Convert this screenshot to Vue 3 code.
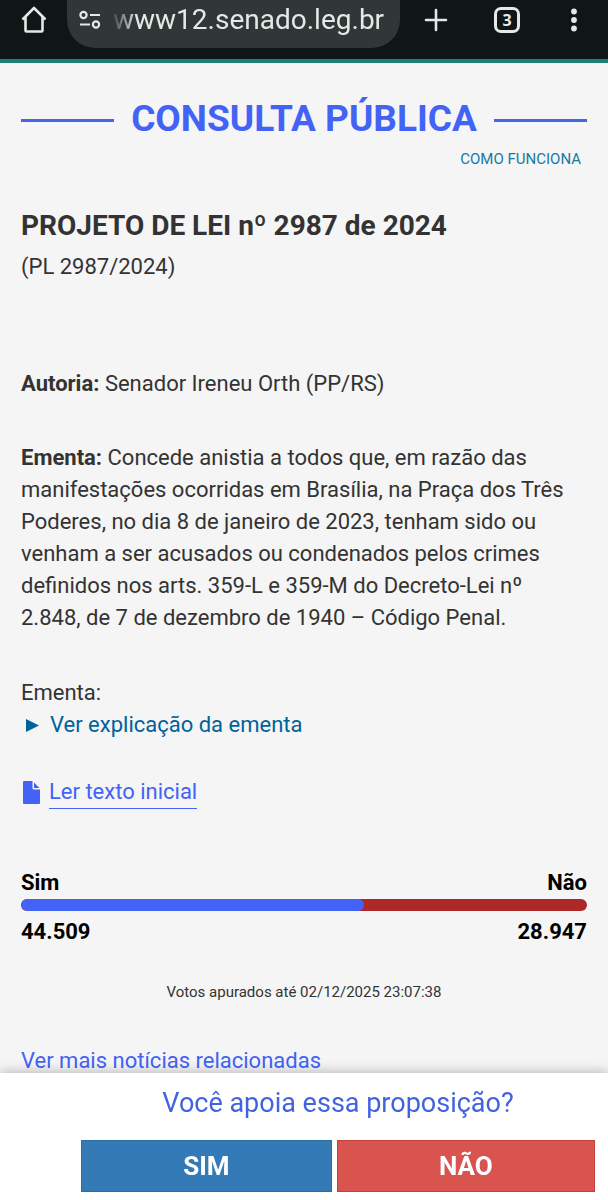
<script setup>
import { computed } from 'vue'

const votes = { yes: 44509, no: 28947 }
const format = (n) => String(n).replace(/\B(?=(\d{3})+$)/g, '.')
const yesShare = computed(() => (votes.yes / (votes.yes + votes.no)) * 100 + '%')
</script>

<template>
  <div class="screen">
    <header class="browser">
      <button class="icon-button home" type="button" aria-label="Página inicial">
        <svg width="26" height="28" viewBox="0 0 26 28">
          <path d="M1.5 13.5 13 2l11.5 11.5M4.5 11v13.5q0 1 1 1h15q1 0 1-1V11" fill="none" stroke="currentColor" stroke-width="2.6" stroke-linejoin="round" />
        </svg>
      </button>
      <div class="address">
        <svg width="22" height="20" viewBox="0 0 22 20" fill="none" stroke="currentColor" stroke-width="2.2">
          <circle cx="4.5" cy="5" r="3.1" />
          <path d="M11 5h10M1 14.5h10" />
          <circle cx="17" cy="14.5" r="3.1" />
        </svg>
        <input class="url" type="text" value="www12.senado.leg.br" aria-label="Endereço" readonly />
      </div>
      <nav class="tools">
        <button class="icon-button" type="button" aria-label="Nova guia">
          <svg width="24" height="24" viewBox="0 0 24 24">
            <path d="M12 2v20M2 12h20" stroke="currentColor" stroke-width="2.6" stroke-linecap="round" />
          </svg>
        </button>
        <button class="icon-button tabs" type="button" aria-label="Guias abertas">3</button>
        <button class="icon-button" type="button" aria-label="Mais opções">
          <svg width="16" height="24" viewBox="0 0 16 24" fill="currentColor">
            <circle cx="8" cy="3.5" r="2.9" />
            <circle cx="8" cy="12" r="2.9" />
            <circle cx="8" cy="20.5" r="2.9" />
          </svg>
        </button>
      </nav>
    </header>

    <main class="content">
      <h1 class="title">CONSULTA PÚBLICA</h1>
      <a class="how" href="#">COMO FUNCIONA</a>

      <h2 class="bill">PROJETO DE LEI nº 2987 de 2024</h2>
      <p class="short">(PL 2987/2024)</p>

      <p class="author"><strong>Autoria:</strong> Senador Ireneu Orth (PP/RS)</p>
      <p class="summary">
        <strong>Ementa:</strong> Concede anistia a todos que, em razão das manifestações ocorridas em Brasília, na Praça dos Três Poderes, no dia 8 de janeiro de 2023, tenham sido ou venham a ser acusados ou condenados pelos crimes definidos nos arts. 359-L e 359-M do Decreto-Lei nº 2.848, de 7 de dezembro de 1940 – Código Penal.
      </p>

      <p>Ementa:</p>
      <a class="explain" href="#">
        <svg width="14" height="14" viewBox="0 0 14 14"><path d="M1 1 14 7.500 1 14z" fill="currentColor" /></svg>
        Ver explicação da ementa
      </a>

      <a class="read" href="#">
        <svg width="18" height="24" viewBox="0 0 18 24" fill="currentColor">
          <path d="M1 0h8.500v7q0 1.500 1.500 1.500H17V22q0 1-1 1H1q-1 0-1-1V1q0-1 1-1z" />
          <path d="M11 1.500 16.500 7H11z" />
        </svg>
        <span>Ler texto inicial</span>
      </a>

      <section class="result">
        <div class="row"><span>Sim</span><span>Não</span></div>
        <div class="bar"><div class="yes" :style="{ width: yesShare }"></div></div>
        <div class="row"><span>{{ format(votes.yes) }}</span><span>{{ format(votes.no) }}</span></div>
      </section>
      <p class="counted">Votos apurados até 02/12/2025 23:07:38</p>
      <a class="news" href="#">Ver mais notícias relacionadas</a>
    </main>

    <footer class="vote">
      <p class="question">Você apoia essa proposição?</p>
      <div class="choices">
        <button class="choice agree" type="button">SIM</button>
        <button class="choice disagree" type="button">NÃO</button>
      </div>
    </footer>
  </div>
</template>

<style>
body {
  background: #f5f5f5;
}
</style>

<style scoped>
.screen {
  font-family: Roboto, "Liberation Sans", sans-serif;
  font-size: 22px;
  line-height: 32px;
  color: #333;
}
h1, h2, p {
  margin: 0;
}
a {
  text-decoration: none;
}
.browser {
  display: flex;
  align-items: flex-start;
  gap: 20px;
  height: 59px;
  padding: 0 26px 0 21px;
  background: #101516;
  border-bottom: 4px solid #1c7f78;
  color: #e4e9e8;
}
.icon-button {
  display: flex;
  align-items: center;
  justify-content: center;
  padding: 0;
  border: 0;
  background: none;
  color: inherit;
  font: inherit;
}
.home {
  height: 40px;
}
.address {
  flex: 1;
  min-width: 0;
  display: flex;
  align-items: center;
  gap: 12px;
  height: 40px;
  padding: 0 8px 8px 12px;
  border-radius: 0 0 28px 28px;
  background: #313637;
}
.address svg {
  flex: none;
}
.url {
  flex: 1;
  min-width: 0;
  padding: 0;
  border: 0;
  outline: 0;
  background: none;
  color: inherit;
  font: 28px/36px Roboto, sans-serif;
  mask-image: linear-gradient(to right, rgba(0, 0, 0, 0.1), #000 24px);
}
.tools {
  display: flex;
  align-items: center;
  gap: 46px;
  height: 40px;
  padding-left: 4px;
}
.tabs {
  box-sizing: border-box;
  width: 26px;
  height: 26px;
  border: 3px solid currentColor;
  border-radius: 7px;
  font: bold 16px/20px "Open Sans", sans-serif;
}
.content {
  display: flow-root;
  padding: 0 21px 140px;
}
.title {
  display: flex;
  align-items: center;
  gap: 17px;
  margin-top: 32px;
  font-size: 37px;
  line-height: 48px;
  color: #4263f5;
  white-space: nowrap;
}
.title::before,
.title::after {
  content: "";
  flex: 1;
  height: 3px;
  margin-top: 3px;
  background: #4466e8;
}
.how {
  display: block;
  margin: 4px 6px 0 0;
  font-size: 15px;
  line-height: 24px;
  text-align: right;
  color: #1779a6;
}
.bill {
  margin-top: 39px;
  font-size: 28px;
  line-height: 32px;
}
.short {
  margin-top: 9px;
}
.author {
  margin-top: 85px;
}
.summary {
  margin: 42px 0 43px;
}
.explain,
.read {
  display: flex;
  align-items: center;
}
.explain {
  gap: 11px;
  padding-left: 4px;
  color: #00629b;
}
.read {
  gap: 8px;
  margin-top: 35px;
  padding-left: 2px;
  color: #4263f5;
}
.read span {
  border-bottom: 1px solid #4263f5;
}
.result {
  margin-top: 58px;
  font-weight: bold;
  color: #000;
}
.row {
  display: flex;
  justify-content: space-between;
}
.bar {
  height: 12px;
  margin-bottom: 5px;
  border-radius: 6px;
  background: #ad2827;
  overflow: hidden;
}
.yes {
  height: 100%;
  border-radius: 6px;
  background: #4263f5;
}
.counted {
  margin-top: 32px;
  font-size: 15px;
  line-height: 24px;
  text-align: center;
}
.news {
  display: block;
  margin-top: 41px;
  color: #4263f5;
}
.vote {
  position: fixed;
  right: 0;
  bottom: 0;
  left: 0;
  padding: 14px 13px 8px 81px;
  background: #fff;
  box-shadow: 0 0 12px rgba(0, 0, 0, 0.3);
}
.question {
  font-size: 27px;
  text-align: center;
  color: #4263e0;
}
.choices {
  display: flex;
  gap: 5px;
  margin-top: 21px;
}
.choice {
  flex: 1 1 auto;
  height: 52px;
  padding: 0;
  border: 1px solid #2e6da4;
  background: #337ab7;
  color: #fff;
  font: bold 26px/32px Roboto, sans-serif;
}
.disagree {
  border-color: #c5403c;
  background: #d9534f;
}
</style>
